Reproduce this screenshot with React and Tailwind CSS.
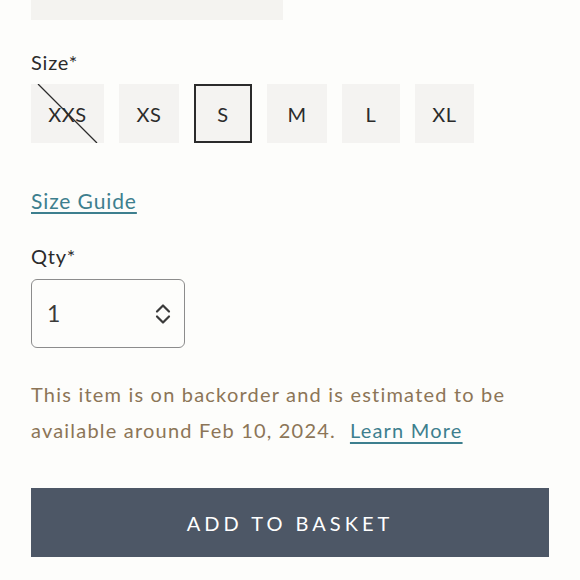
import React from "react";

const sizes = [
  { label: "XXS", out: true, w: "w-[73px]" },
  { label: "XS", w: "w-[60px]" },
  { label: "S", selected: true, w: "w-[58px]" },
  { label: "M", w: "w-[60px]" },
  { label: "L", w: "w-[58px]" },
  { label: "XL", w: "w-[59px]" },
];

export default function App() {
  return (
    <div className="min-h-[580px] w-[580px] bg-[#fdfdfb] px-[31px] font-['Lato','Noto_Sans',sans-serif] text-[#2b2b2b]">
      <div className="h-[20px] w-[252px] bg-[#f4f3f0]" />

      <div className="mt-[31px] text-[20px] leading-[22px] tracking-[0.8px]">Size*</div>
      <div className="mt-[11px] flex gap-[15px]">
        {sizes.map((s) => (
          <div
            key={s.label}
            className={`relative flex h-[59px] items-center justify-center bg-[#f4f3f1] text-[20px] tracking-[0.6px] ${s.w} ${
              s.selected ? "border-2 border-[#2b2b2b]" : ""
            }`}
          >
            {s.label}
            {s.out && (
              <svg className="absolute inset-0" width="73" height="59" viewBox="0 0 73 59">
                <line x1="7" y1="0" x2="66" y2="59" stroke="#2b2b2b" strokeWidth="1.3" />
              </svg>
            )}
          </div>
        ))}
      </div>

      <div className="mt-[46px]">
        <a className="text-[21px] leading-[24px] tracking-[0.9px] text-[#3d7f8e] underline underline-offset-[3px] decoration-[1.5px]">
          Size Guide
        </a>
      </div>

      <div className="mt-[30px] text-[20px] leading-[22px] tracking-[0.8px]">Qty*</div>
      <div className="mt-[12px] flex h-[69px] w-[154px] items-center justify-between rounded-[6px] border-[1.5px] border-[#8c8c8c] pl-[15px] pr-[12px]">
        <span className="text-[23px] text-[#3a3a3a]">1</span>
        <svg width="18" height="22" viewBox="0 0 18 22" fill="none" stroke="#3a3a3a" strokeWidth="2.2" strokeLinecap="round" strokeLinejoin="round">
          <path d="M3 8.5 L9 2.5 L15 8.5" />
          <path d="M3 13.5 L9 19.5 L15 13.5" />
        </svg>
      </div>

      <p className="mt-[28px] text-[20px] leading-[36px] tracking-[1.2px] text-[#8c7557]">
        This item is on backorder and is estimated to be
        <br />
        available around Feb 10, 2024.
        <a className="ml-[14px] text-[#3d7f8e] underline underline-offset-[4px] decoration-[1.5px]">Learn More</a>
      </p>

      <button className="mt-[40px] flex h-[69px] w-[518px] items-center justify-center bg-[#4d5766] text-[20px] tracking-[4px] text-white">
        ADD TO BASKET
      </button>
    </div>
  );
}
